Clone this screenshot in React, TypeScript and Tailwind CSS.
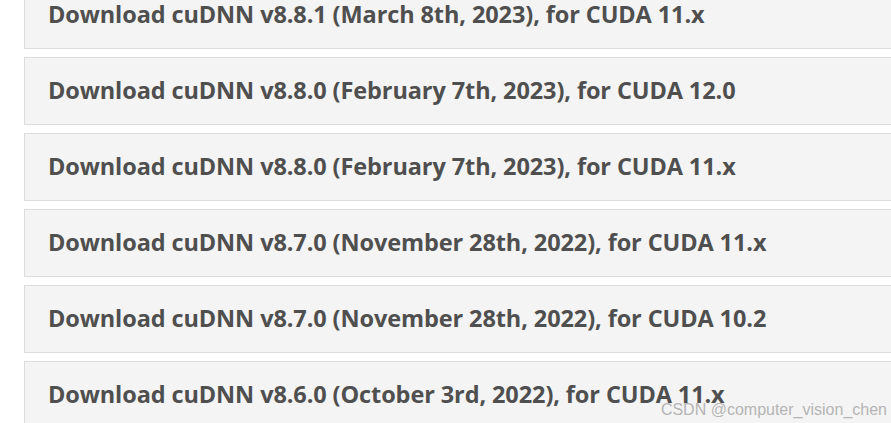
const ROWS = [
  'Download cuDNN v8.8.1 (March 8th, 2023), for CUDA 11.x',
  'Download cuDNN v8.8.0 (February 7th, 2023), for CUDA 12.0',
  'Download cuDNN v8.8.0 (February 7th, 2023), for CUDA 11.x',
  'Download cuDNN v8.7.0 (November 28th, 2022), for CUDA 11.x',
  'Download cuDNN v8.7.0 (November 28th, 2022), for CUDA 10.2',
  'Download cuDNN v8.6.0 (October 3rd, 2022), for CUDA 11.x',
]

export default function App() {
  return (
    <div className="relative w-[891px] h-[423px] overflow-hidden bg-white">
      <div className="mt-[-19px] pl-[24px] flex flex-col gap-[8px]">
        {ROWS.map((r) => (
          <div key={r} className="h-[68px] w-[900px] shrink-0 border border-[#dcdcdc] bg-[#f4f4f4] flex items-center pl-[23px]">
            <span className="text-[23.5px] font-bold text-[#4f4f4f] whitespace-nowrap tracking-[-0.1px]" style={{ fontFamily: '"Open Sans", sans-serif' }}>
              {r}
            </span>
          </div>
        ))}
      </div>
      {/* watermark */}
      <span className="absolute right-[4px] bottom-[5px] text-[16px] leading-none text-[#b5b5b5]" style={{ fontFamily: '"Liberation Sans", sans-serif' }}>
        CSDN @computer_vision_chen
      </span>
    </div>
  )
}
